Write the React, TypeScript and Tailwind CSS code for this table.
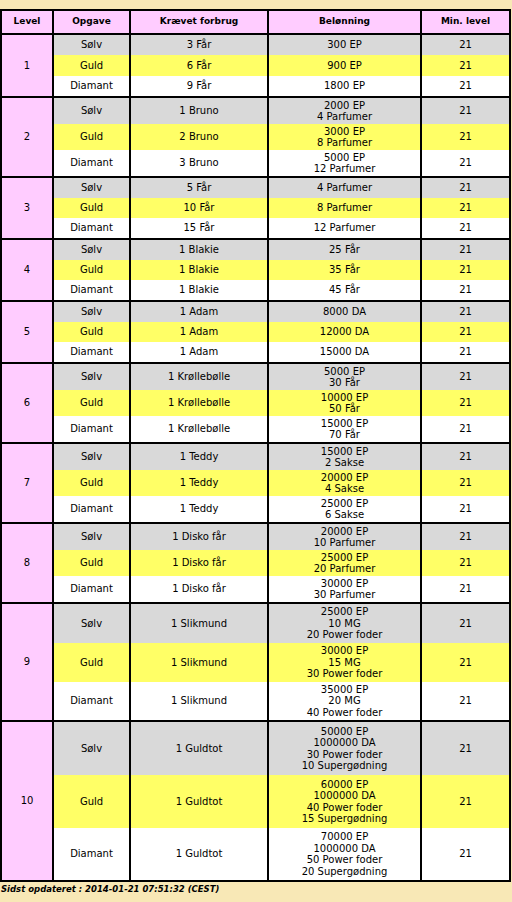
import React from "react"

type Group = {
    level: number
    items: [string, string, string]
    rewards: [string[], string[], string[]]
    heights: string
}

const tasks = ["Sølv", "Guld", "Diamant"]
const rowBg = ["bg-[#d9d9d9]", "bg-[#ffff66]", "bg-white"]

const groups: Group[] = [
    { level: 1, items: ["3 Får", "6 Får", "9 Får"], rewards: [["300 EP"], ["900 EP"], ["1800 EP"]], heights: "grid-rows-[20px_21px_20px]" },
    { level: 2, items: ["1 Bruno", "2 Bruno", "3 Bruno"], rewards: [["2000 EP", "4 Parfumer"], ["3000 EP", "8 Parfumer"], ["5000 EP", "12 Parfumer"]], heights: "grid-rows-[26px_26px_26px]" },
    { level: 3, items: ["5 Får", "10 Får", "15 Får"], rewards: [["4 Parfumer"], ["8 Parfumer"], ["12 Parfumer"]], heights: "grid-rows-[20px_20px_20px]" },
    { level: 4, items: ["1 Blakie", "1 Blakie", "1 Blakie"], rewards: [["25 Får"], ["35 Får"], ["45 Får"]], heights: "grid-rows-[20px_20px_20px]" },
    { level: 5, items: ["1 Adam", "1 Adam", "1 Adam"], rewards: [["8000 DA"], ["12000 DA"], ["15000 DA"]], heights: "grid-rows-[20px_20px_20px]" },
    { level: 6, items: ["1 Krøllebølle", "1 Krøllebølle", "1 Krøllebølle"], rewards: [["5000 EP", "30 Får"], ["10000 EP", "50 Får"], ["15000 EP", "70 Får"]], heights: "grid-rows-[26px_26px_26px]" },
    { level: 7, items: ["1 Teddy", "1 Teddy", "1 Teddy"], rewards: [["15000 EP", "2 Sakse"], ["20000 EP", "4 Sakse"], ["25000 EP", "6 Sakse"]], heights: "grid-rows-[26px_26px_26px]" },
    { level: 8, items: ["1 Disko får", "1 Disko får", "1 Disko får"], rewards: [["20000 EP", "10 Parfumer"], ["25000 EP", "20 Parfumer"], ["30000 EP", "30 Parfumer"]], heights: "grid-rows-[26px_26px_26px]" },
    { level: 9, items: ["1 Slikmund", "1 Slikmund", "1 Slikmund"], rewards: [["25000 EP", "10 MG", "20 Power foder"], ["30000 EP", "15 MG", "30 Power foder"], ["35000 EP", "20 MG", "40 Power foder"]], heights: "grid-rows-[39px_39px_38px]" },
    { level: 10, items: ["1 Guldtot", "1 Guldtot", "1 Guldtot"], rewards: [["50000 EP", "1000000 DA", "30 Power foder", "10 Supergødning"], ["60000 EP", "1000000 DA", "40 Power foder", "15 Supergødning"], ["70000 EP", "1000000 DA", "50 Power foder", "20 Supergødning"]], heights: "grid-rows-[53px_53px_52px]" },
]

const cols = "grid grid-cols-[50px_75px_136px_151px_87px] gap-x-[2px]"
const cell = "flex flex-col items-center justify-center text-center"

export default function App() {
    return (
        <div className="min-h-screen bg-[#f8e8b6] pt-[9px] text-[10px] leading-[11.5px] text-black [font-family:'DejaVu_Sans',Verdana,sans-serif]">
            <div className="w-[511px] border-2 border-black bg-black flex flex-col gap-y-[2px]">
                {/* header row */}
                <div className={`${cols} h-[22px] text-[9px] font-bold`}>
                    {["Level", "Opgave", "Krævet forbrug", "Belønning", "Min. level"].map((h) => (
                        <div key={h} className={`${cell} bg-[#ffccff]`}>
                            {h}
                        </div>
                    ))}
                </div>

                {groups.map((g) => (
                    <div key={g.level} className={`${cols} ${g.heights}`}>
                        <div className={`${cell} row-span-3 bg-[#ffccff]`}>{g.level}</div>
                        {[0, 1, 2].map((i) => (
                            <React.Fragment key={i}>
                                <div className={`${cell} ${rowBg[i]} col-start-2`}>{tasks[i]}</div>
                                <div className={`${cell} ${rowBg[i]}`}>{g.items[i]}</div>
                                <div className={`${cell} ${rowBg[i]}`}>
                                    {g.rewards[i].map((r) => (
                                        <span key={r}>{r}</span>
                                    ))}
                                </div>
                                <div className={`${cell} ${rowBg[i]}`}>21</div>
                            </React.Fragment>
                        ))}
                    </div>
                ))}
            </div>
            <div className="pl-[1px] pt-[2px] text-[8.5px] leading-[11px] font-bold italic">
                Sidst opdateret : 2014-01-21 07:51:32 (CEST)
            </div>
        </div>
    )
}
